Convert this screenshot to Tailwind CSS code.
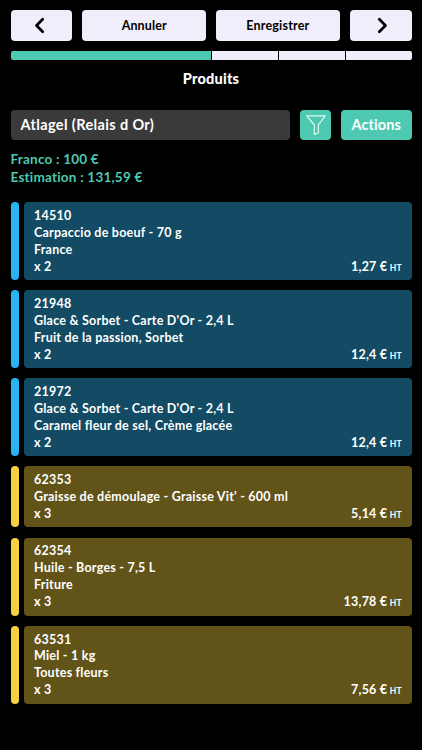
<!DOCTYPE html>
<html lang="fr">
<head>
  <meta charset="UTF-8" />
  <meta name="viewport" content="width=device-width, initial-scale=1.0" />
  <script src="https://cdn.jsdelivr.net/npm/@tailwindcss/browser@4"></script>
  <title>Produits</title>
</head>
<body class="bg-black text-white font-['Lato',sans-serif] font-bold">
  <div class="h-[750px] overflow-hidden px-[10.5px] pt-[10.3px]">
    <div class="flex gap-[10.2px] h-[30.8px] text-[12.5px] text-black tracking-[0.2px]">
      <button class="w-[61.8px] rounded-[4px] bg-[#f0eefb] flex items-center justify-center" aria-label="Précédent">
        <svg class="w-[17px] h-[17px] mr-[3px]" viewBox="0 0 16 16" fill="none" stroke="#000" stroke-width="2.6" stroke-linecap="round" stroke-linejoin="round"><path d="M11 2.2 5.2 8 11 13.8" /></svg>
      </button>
      <button class="flex-1 rounded-[4px] bg-[#f0eefb] pt-[2px] tracking-[0.1px]">Annuler</button>
      <button class="flex-1 rounded-[4px] bg-[#f0eefb] pt-[2px]">Enregistrer</button>
      <button class="w-[61.8px] rounded-[4px] bg-[#f0eefb] flex items-center justify-center" aria-label="Suivant">
        <svg class="w-[17px] h-[17px] ml-[3px]" viewBox="0 0 16 16" fill="none" stroke="#000" stroke-width="2.6" stroke-linecap="round" stroke-linejoin="round"><path d="M5 2.2 10.8 8 5 13.8" /></svg>
      </button>
    </div>

    <div class="flex gap-[1.5px] h-[8.5px] mt-[10px] rounded-[2px] overflow-hidden">
      <div class="w-[200px] bg-[#4cc9b0]"></div>
      <div class="flex-1 bg-[#f0eefb]"></div>
      <div class="flex-1 bg-[#f0eefb]"></div>
      <div class="flex-1 bg-[#f0eefb]"></div>
    </div>

    <h1 class="mt-[9.4px] h-5 text-center text-[14.5px] leading-5 font-black tracking-[0.2px]">Produits</h1>

    <div class="flex gap-[10.2px] h-[30.6px] mt-[20.6px]">
      <div class="flex-1 rounded-[4px] bg-[#3a3a3a] px-[10px] text-[14.5px] leading-[30px] tracking-[0.37px]">Atlagel (Relais d Or)</div>
      <button class="w-[30.6px] rounded-[4px] bg-[#4cc9b0] flex items-center justify-center" aria-label="Filtrer">
        <svg class="w-5 h-5" viewBox="0 0 20 20" fill="none" stroke="#dffaf4" stroke-width="1.2" stroke-linejoin="round"><path d="M.8.8h18.4L12.3 10v8l-4 1.4V10Z" /></svg>
      </button>
      <button class="w-[70.4px] rounded-[4px] bg-[#4cc9b0] text-[14.5px] tracking-[0.1px]">Actions</button>
    </div>

    <div class="mt-[10px] text-[13.5px] leading-[18.2px] tracking-[0.22px] text-[#4cc9b0]">
      <p>Franco : 100 €</p>
      <p>Estimation : 131,59 €</p>
    </div>

    <div id="products" class="mt-[15.5px] flex flex-col gap-[10.2px]"></div>
  </div>

  <script>
    const products = [
      { code: "14510", lines: ["Carpaccio de boeuf - 70 g", "France"], qty: 2, price: "1,27", type: "frozen" },
      { code: "21948", lines: ["Glace & Sorbet - Carte D'Or - 2,4 L", "Fruit de la passion, Sorbet"], qty: 2, price: "12,4", type: "frozen" },
      { code: "21972", lines: ["Glace & Sorbet - Carte D'Or - 2,4 L", "Caramel fleur de sel, Crème glacée"], qty: 2, price: "12,4", type: "frozen" },
      { code: "62353", lines: ["Graisse de démoulage - Graisse Vit' - 600 ml"], qty: 3, price: "5,14", type: "dry" },
      { code: "62354", lines: ["Huile - Borges - 7,5 L", "Friture"], qty: 3, price: "13,78", type: "dry" },
      { code: "63531", lines: ["Miel - 1 kg", "Toutes fleurs"], qty: 3, price: "7,56", type: "dry" }
    ];

    const colors = {
      frozen: { bar: "bg-[#2bb3f8]", card: "bg-[#124b63]" },
      dry: { bar: "bg-[#f5d142]", card: "bg-[#625419]" }
    };

    document.getElementById("products").innerHTML = products.map(p => `
      <div class="flex gap-[5.2px]">
        <div class="w-[8.3px] rounded-full ${colors[p.type].bar}"></div>
        <div class="flex-1 rounded-[4px] px-[10px] pt-[5.8px] pb-[4.5px] text-[12.5px] leading-[16.9px] tracking-[0.23px] ${colors[p.type].card}">
          <p>${p.code}</p>
          ${p.lines.map(l => `<p>${l.replace("&", "&amp;")}</p>`).join("")}
          <div class="flex justify-between">
            <span>x ${p.qty}</span>
            <span>${p.price} €<span class="ml-[2.5px] text-[8.5px] leading-none tracking-normal">HT</span></span>
          </div>
        </div>
      </div>`).join("");
  </script>
</body>
</html>
